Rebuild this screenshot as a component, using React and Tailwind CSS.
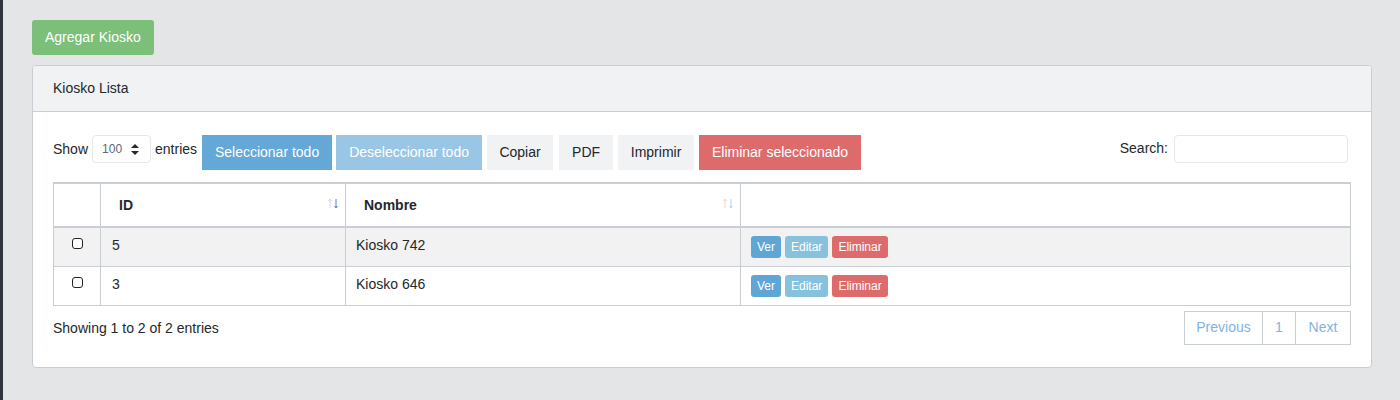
import React from 'react'

const rows = [
  { id: 5, nombre: 'Kiosko 742' },
  { id: 3, nombre: 'Kiosko 646' },
]

function SortIcon({ up, down }) {
  return (
    <svg
      className="absolute right-[7px] top-[14px]"
      width="10"
      height="11"
      viewBox="0 0 10 11"
    >
      <path d="M2 1 V10" stroke={up} strokeWidth="1" />
      <path d="M0.5 3 L2 1 L3.5 3" stroke={up} strokeWidth="1" fill="none" />
      <path d="M8 1 V10" stroke={down} strokeWidth="1" />
      <path d="M6.5 8 L8 10 L9.5 8" stroke={down} strokeWidth="1" fill="none" />
    </svg>
  )
}

export default function App() {
  return (
    <div className="min-h-[400px] bg-[#e4e5e6] flex font-['Liberation_Sans',Arial,sans-serif] text-[14px] text-[#23282c]">
      {/* dark sidebar edge */}
      <div className="w-[3px] bg-[#2f353a] shrink-0" />

      <div className="flex-1 pl-[29px] pr-[28px] pt-[20px]">
        <button className="h-[35px] px-[13px] rounded-[3px] bg-[#7bbf79] text-white text-[14px]">
          Agregar Kiosko
        </button>

        <div className="mt-[10px] bg-white border border-[#c8ced3] rounded-[4px] overflow-hidden">
          {/* Header */}
          <div className="h-[46px] bg-[#f1f2f4] border-b border-[#c8ced3] flex items-center px-[20px]">
            Kiosko Lista
          </div>

          {/* Body */}
          <div className="px-[20px] pt-[23px] pb-[22px]">
            {/* Controls */}
            <div className="flex items-start justify-between">
              <div className="flex items-start">
                <div className="flex items-center h-[28px] gap-[4px]">
                  <span>Show</span>
                  <div className="w-[59px] h-[28px] border border-[#e4e7ea] rounded-[4px] flex items-center justify-between pl-[9px] pr-[11px] text-[12px] text-[#5c6873]">
                    <span>100</span>
                    <svg width="8" height="11" viewBox="0 0 8 11">
                      <path d="M4 0 L8 4 L0 4 Z" fill="#23282c" />
                      <path d="M4 11 L8 7 L0 7 Z" fill="#23282c" />
                    </svg>
                  </div>
                  <span>entries</span>
                </div>
                <div className="flex ml-[5px] h-[35px]">
                  <button className="w-[130px] h-[35px] bg-[#63a8d7] text-white">Seleccionar todo</button>
                  <button className="ml-[4px] w-[146px] h-[35px] bg-[#9ac6e6] text-white">Deseleccionar todo</button>
                  <button className="ml-[5px] w-[66px] h-[35px] bg-[#f1f2f4] text-[#23282c]">Copiar</button>
                  <button className="ml-[6px] w-[54px] h-[35px] bg-[#f1f2f4] text-[#23282c]">PDF</button>
                  <button className="ml-[5px] w-[76px] h-[35px] bg-[#f1f2f4] text-[#23282c]">Imprimir</button>
                  <button className="ml-[5px] w-[162px] h-[35px] bg-[#de6b6b] text-white">Eliminar seleccionado</button>
                </div>
              </div>
              <div className="flex items-center h-[28px] mr-[3px]">
                <span className="mr-[6px] relative top-[-1px]">Search:</span>
                <input className="w-[174px] h-[28px] border border-[#e4e7ea] rounded-[4px] outline-none" />
              </div>
            </div>

            {/* Table */}
            <table className="mt-[12px] w-full border-collapse border border-[#c8ced3]">
              <thead>
                <tr className="h-[44px] border-t-[2px] border-b-[2px] border-[#c8ced3]">
                  <th className="w-[47px] border-r border-[#c8ced3]" />
                  <th className="relative w-[245px] border-r border-[#c8ced3] text-left font-bold pl-[18px]">
                    ID
                    <SortIcon up="#d4d8dd" down="#5b7fc8" />
                  </th>
                  <th className="relative w-[395px] border-r border-[#c8ced3] text-left font-bold pl-[18px]">
                    Nombre
                    <SortIcon up="#f3d5bd" down="#b8d0ec" />
                  </th>
                  <th />
                </tr>
              </thead>
              <tbody>
                {rows.map((r, i) => (
                  <tr
                    key={r.id}
                    className={`h-[39px] border-t border-[#c8ced3] ${i === 0 ? 'bg-[#f2f2f2]' : 'bg-white'}`}
                  >
                    <td className="border-r border-[#c8ced3] text-center align-middle">
                      <span className="inline-block w-[11px] h-[11px] border border-[#222] rounded-[3px] bg-white relative top-[-2px]" />
                    </td>
                    <td className="border-r border-[#c8ced3] pl-[11px] pb-[3px]">{r.id}</td>
                    <td className="border-r border-[#c8ced3] pl-[10px] pb-[3px]">{r.nombre}</td>
                    <td className="pl-[10px]">
                      <div className="flex gap-[4px] text-[12px] text-white">
                        <span className="h-[22px] px-[6px] flex items-center rounded-[3px] bg-[#5fa6d6]">Ver</span>
                        <span className="h-[22px] px-[6px] flex items-center rounded-[3px] bg-[#86c1de]">Editar</span>
                        <span className="h-[22px] px-[6px] flex items-center rounded-[3px] bg-[#de6b6b]">Eliminar</span>
                      </div>
                    </td>
                  </tr>
                ))}
              </tbody>
            </table>

            {/* Footer */}
            <div className="flex items-start justify-between mt-[5px]">
              <div className="pt-[7px]">Showing 1 to 2 of 2 entries</div>
              <div className="flex h-[34px] border border-[#c8ced3] text-[#7fb3e0]">
                <span className="w-[78px] flex items-center justify-center border-r border-[#c8ced3]">Previous</span>
                <span className="w-[33px] flex items-center justify-center border-r border-[#c8ced3]">1</span>
                <span className="w-[54px] flex items-center justify-center">Next</span>
              </div>
            </div>
          </div>
        </div>
      </div>
    </div>
  )
}
